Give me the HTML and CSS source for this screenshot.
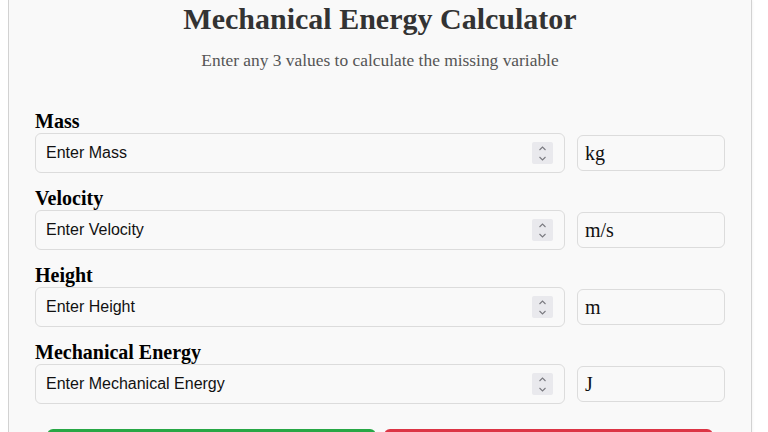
FILE: index.html
```html
<!DOCTYPE html>
<html lang="en">
<head>
    <meta charset="UTF-8">
    <meta name="viewport" content="width=device-width, initial-scale=1.0">
    <title>Mechanical Energy Calculator</title>
    <link rel="stylesheet" href="styles.css">
</head>
<body>
    <div class="calculator">
        <h1>Mechanical Energy Calculator</h1>
        <p class="subtitle">Enter any 3 values to calculate the missing variable</p>

        <!-- Mass -->
        <div class="group">
            <label for="mass">Mass</label>
            <div class="row">
                <div class="field">
                    <input type="text" id="mass" placeholder="Enter Mass">
                    <span class="spin"><svg width="21" height="22" viewBox="0 0 21 22"><path d="M7.5 8 L10.5 5 L13.5 8 M7.5 15 L10.5 18 L13.5 15" fill="none" stroke="#7a7a80" stroke-width="1.1"/></svg></span>
                </div>
                <div class="unit">kg</div>
            </div>
        </div>

        <!-- Velocity -->
        <div class="group">
            <label for="velocity">Velocity</label>
            <div class="row">
                <div class="field">
                    <input type="text" id="velocity" placeholder="Enter Velocity">
                    <span class="spin"><svg width="21" height="22" viewBox="0 0 21 22"><path d="M7.5 8 L10.5 5 L13.5 8 M7.5 15 L10.5 18 L13.5 15" fill="none" stroke="#7a7a80" stroke-width="1.1"/></svg></span>
                </div>
                <div class="unit">m/s</div>
            </div>
        </div>

        <!-- Height -->
        <div class="group">
            <label for="height">Height</label>
            <div class="row">
                <div class="field">
                    <input type="text" id="height" placeholder="Enter Height">
                    <span class="spin"><svg width="21" height="22" viewBox="0 0 21 22"><path d="M7.5 8 L10.5 5 L13.5 8 M7.5 15 L10.5 18 L13.5 15" fill="none" stroke="#7a7a80" stroke-width="1.1"/></svg></span>
                </div>
                <div class="unit">m</div>
            </div>
        </div>

        <!-- Mechanical Energy -->
        <div class="group">
            <label for="energy">Mechanical Energy</label>
            <div class="row">
                <div class="field">
                    <input type="text" id="energy" placeholder="Enter Mechanical Energy">
                    <span class="spin"><svg width="21" height="22" viewBox="0 0 21 22"><path d="M7.5 8 L10.5 5 L13.5 8 M7.5 15 L10.5 18 L13.5 15" fill="none" stroke="#7a7a80" stroke-width="1.1"/></svg></span>
                </div>
                <div class="unit">J</div>
            </div>
        </div>

        <div class="buttons">
            <button class="btn calc" aria-label="Calculate"></button>
            <button class="btn reset" aria-label="Reset"></button>
        </div>
    </div>
</body>
</html>
```

FILE: styles.css
```css
* {
    box-sizing: border-box;
}
body {
    margin: 0 8px;
    background: #fff;
    font-family: "Liberation Serif", "Times New Roman", serif;
}
.calculator {
    width: 744px;
    padding: 2px 26px 20px;
    background: #f9f9f9;
    border: 1px solid #d2d2d2;
    border-top: none;
    box-shadow: 0 0 3px rgba(0, 0, 0, 0.08);
}
h1 {
    margin: 0;
    font-size: 30px;
    line-height: 34px;
    text-align: center;
    color: #333;
}
.subtitle {
    margin: 14px 0 39px;
    font-size: 17.4px;
    line-height: 20px;
    text-align: center;
    color: #555;
}
.group {
    margin-bottom: 13px;
}
.group label {
    display: block;
    font-size: 20px;
    line-height: 24px;
    font-weight: bold;
    color: #000;
}
.row {
    display: flex;
    align-items: center;
    gap: 12px;
}
.field {
    flex: 1;
    height: 40px;
    display: flex;
    align-items: center;
    padding: 0 11px 0 10px;
    border: 1px solid #dcdcdc;
    border-radius: 6px;
    background: #f9f9f9;
}
.field input {
    flex: 1;
    border: none;
    outline: none;
    background: transparent;
    padding: 0;
    font-family: "Liberation Sans", Arial, sans-serif;
    font-size: 16px;
    color: #111;
}
.field input::placeholder {
    color: #111;
}
.spin {
    width: 21px;
    height: 22px;
    border-radius: 2px;
    background: #e9e9ed;
    display: flex;
}
.unit {
    width: 148px;
    height: 36px;
    display: flex;
    align-items: center;
    padding: 0 7px;
    border: 1px solid #dcdcdc;
    border-radius: 6px;
    background: #f9f9f9;
    font-size: 20px;
    color: #111;
}
.buttons {
    display: flex;
    gap: 8px;
    padding: 0 12px;
    margin-top: 25px;
}
.btn {
    flex: 1;
    height: 40px;
    border: none;
    border-radius: 6px;
}
.calc {
    background: #28a745;
}
.reset {
    background: #dc3545;
}
```
